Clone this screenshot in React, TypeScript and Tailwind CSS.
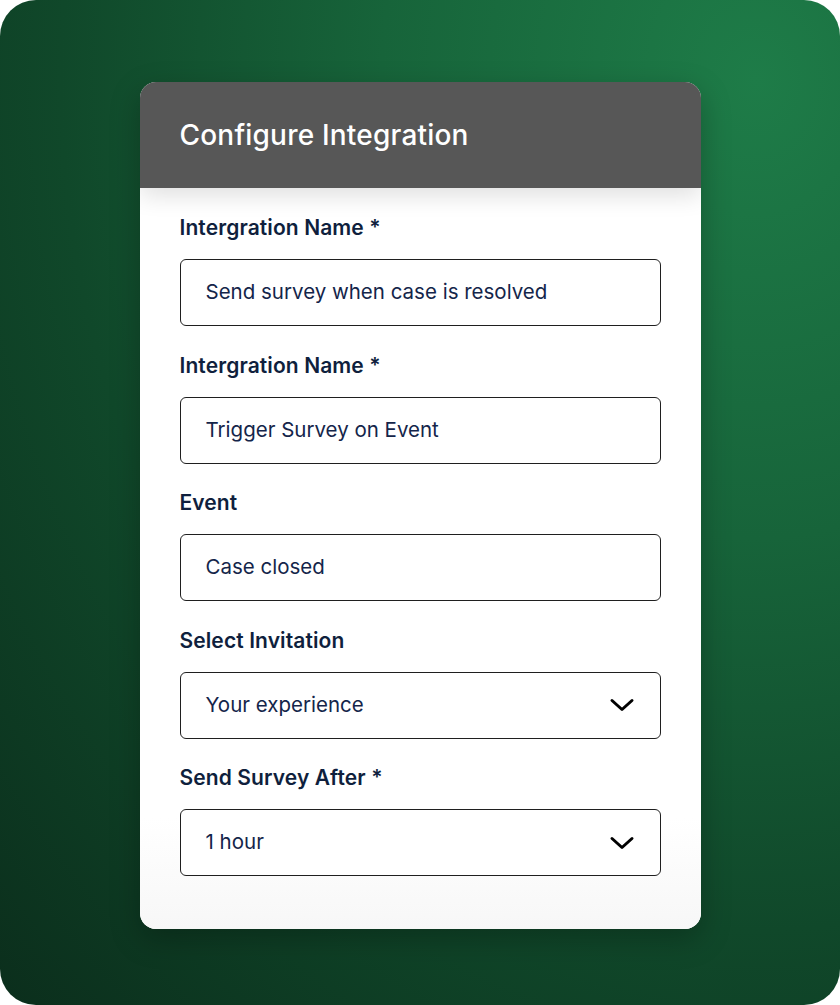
type Field = {
  label: string;
  value: string;
  select?: boolean;
};

const fields: Field[] = [
  { label: 'Intergration Name *', value: 'Send survey when case is resolved' },
  { label: 'Intergration Name *', value: 'Trigger Survey on Event' },
  { label: 'Event', value: 'Case closed' },
  { label: 'Select Invitation', value: 'Your experience', select: true },
  { label: 'Send Survey After *', value: '1 hour', select: true },
];

function Chevron() {
  return (
    <svg width="26" height="16" viewBox="0 0 26 16" fill="none" aria-hidden="true">
      <path d="M3 3.5 L13 12.5 L23 3.5" stroke="#000" strokeWidth="3" strokeLinecap="round" strokeLinejoin="round" />
    </svg>
  );
}

function FormField({ label, value, select }: Field) {
  return (
    <div className="flex flex-col">
      <label className="text-[21px] leading-[24px] font-semibold tracking-[0.1px] text-[#0f1f3d]">{label}</label>
      <div className="mt-[19px] flex h-[67px] items-center justify-between rounded-[6px] border-[1.5px] border-[#1f1f1f] bg-white pl-[25px] pr-[25px]">
        <span className="text-[20.5px] text-[#14254a]">{value}</span>
        {select && <Chevron />}
      </div>
    </div>
  );
}

export default function App() {
  return (
    <div
      className="flex h-[1005px] w-[840px] items-start justify-center overflow-hidden rounded-[36px] bg-[radial-gradient(ellipse_at_90%_8%,#1e7c48_0%,#17643a_35%,#10482a_65%,#0b2e1c_100%)] pt-[82px]"
      style={{ fontFamily: 'Inter, "Noto Sans", sans-serif' }}
    >
      <div className="w-[561px] overflow-hidden rounded-[16px] bg-white shadow-[0_10px_30px_rgba(0,0,0,0.25)]">
        <div className="relative z-10 flex h-[106px] items-center bg-[#575757] px-[40px] shadow-[0_8px_22px_rgba(0,0,0,0.12)]">
          <h1 className="text-[28px] font-medium tracking-[0.2px] text-white">Configure Integration</h1>
        </div>
        <div className="flex flex-col gap-[27.5px] bg-[linear-gradient(to_bottom,#ffffff_85%,#f7f7f7_100%)] px-[40px] pt-[28px] pb-[53px]">
          {fields.map((f, i) => (
            <FormField key={i} {...f} />
          ))}
        </div>
      </div>
    </div>
  );
}
